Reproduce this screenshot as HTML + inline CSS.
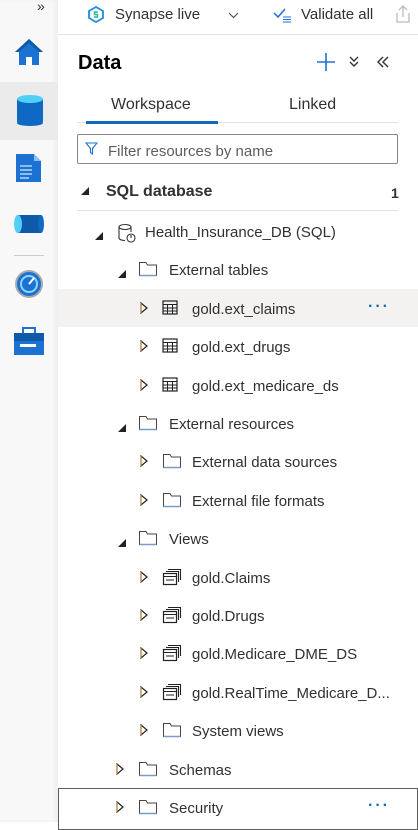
<!DOCTYPE html>
<html><head><meta charset="utf-8"><style>
body{margin:0;width:418px;height:822px;overflow:hidden;background:#fff;font-family:"Liberation Sans",sans-serif;color:#323130;position:relative}
.a{position:absolute}
.side{left:0;top:0;width:58px;height:822px;background:#f8f8f8;box-shadow:inset -3px 0 4px rgba(0,0,0,.04)}
.row{position:absolute;left:58px;width:360px;height:38px}
.t{position:absolute;top:12px;font-size:15px;white-space:nowrap;color:#323130}
.tri{position:absolute}
.ic{position:absolute;top:11px}
</style></head><body>
<div class="a side"></div>
<div class="a" style="left:0;top:82px;width:58px;height:58px;background:#ebebeb"></div>
<div class="a" style="left:37px;top:-2px;font-size:14px;color:#333">»</div>
<svg class="a" style="left:14px;top:38px" width="30" height="28" viewBox="0 0 30 28"><path d="M15 1 L29 14 H25 V27 H5 V14 H1 Z" fill="#1b72d3"/><path d="M15 1 L29 14 H25 L15 5 L5 14 H1Z" fill="#0f5aa8"/><rect x="12" y="19" width="6" height="8" fill="#fff"/></svg>
<svg class="a" style="left:17px;top:94px" width="26" height="32"><rect x="0" y="4" width="26" height="25" rx="2" fill="#0f68c4"/><ellipse cx="13" cy="29" rx="13" ry="3" fill="#0f68c4"/><ellipse cx="13" cy="5" rx="13" ry="4" fill="#50d0f5"/></svg>
<svg class="a" style="left:16px;top:154px" width="26" height="30"><path d="M0 0H18L25 7V28H0Z" fill="#1b72d3"/><path d="M18 0L25 7H18Z" fill="#8fc1ef"/><g stroke="#cfe4fa" stroke-width="1.3"><line x1="4" y1="12" x2="16" y2="12"/><line x1="4" y1="16" x2="16" y2="16"/><line x1="4" y1="20" x2="16" y2="20"/><line x1="4" y1="24" x2="13" y2="24"/></g></svg>
<svg class="a" style="left:13px;top:212px" width="32" height="24"><rect x="4" y="3" width="24" height="18" fill="#0f5aa8"/><ellipse cx="5" cy="12" rx="4" ry="9" fill="#50d0f5"/><ellipse cx="28" cy="12" rx="3" ry="9" fill="#0f68c4"/></svg>
<div class="a" style="left:14px;top:255px;width:30px;height:1px;background:#ccc"></div>
<svg class="a" style="left:14px;top:269px" width="30" height="30"><circle cx="15" cy="15" r="14" fill="#aaa"/><circle cx="15" cy="15" r="12" fill="#1b72d3"/><circle cx="15" cy="15" r="8" fill="none" stroke="#8fd3f5" stroke-width="2"/><line x1="15" y1="15" x2="20" y2="9" stroke="#fff" stroke-width="2"/></svg>
<svg class="a" style="left:14px;top:327px" width="30" height="30"><rect x="9" y="1" width="12" height="6" fill="none" stroke="#1b72d3" stroke-width="2"/><rect x="0" y="6" width="30" height="22" fill="#1b72d3"/><rect x="0" y="6" width="30" height="8" fill="#0f5aa8"/><rect x="6" y="17" width="16" height="3" fill="#fff"/></svg>
<div class="a" style="left:58px;top:34px;width:360px;height:1px;background:#e1e1e1"></div>
<svg class="a" style="left:88px;top:6px" width="16" height="17"><path d="M8 1L15 5V12L8 16L1 12V5Z" fill="none" stroke="#1b8fe0" stroke-width="1.8"/><path d="M10 6H6.5V8.5H9.5V11H6" fill="none" stroke="#2bb3a8" stroke-width="1.5"/></svg>
<div class="a" style="left:115px;top:6px;font-size:15px;color:#323130">Synapse live</div>
<svg class="a" style="left:228px;top:12px" width="11" height="7"><path d="M1 1L5.5 5.5L10 1" fill="none" stroke="#555" stroke-width="1.2"/></svg>
<svg class="a" style="left:273px;top:7px" width="20" height="16"><path d="M1 6L5 10L12 2" fill="none" stroke="#1b72d3" stroke-width="1.5"/><g stroke="#1b72d3"><line x1="10" y1="10" x2="18" y2="10"/><line x1="10" y1="12.5" x2="18" y2="12.5"/><line x1="10" y1="15" x2="18" y2="15"/></g></svg>
<div class="a" style="left:301px;top:6px;font-size:15px">Validate all</div>
<svg class="a" style="left:395px;top:4px" width="16" height="20"><path d="M4 6L8 2L12 6M8 2V13M2 9V18H14V9" fill="none" stroke="#bbb" stroke-width="1.3"/></svg>
<div class="a" style="left:78px;top:52px;font-size:20px;font-weight:bold;color:#000">Data</div>
<svg class="a" style="left:316px;top:52px" width="20" height="20"><path d="M10 1V19M1 10H19" stroke="#1b72d3" stroke-width="1.6"/></svg>
<svg class="a" style="left:349px;top:56px" width="10" height="12"><path d="M1 1L5 5L9 1M1 6L5 10L9 6" fill="none" stroke="#333" stroke-width="1.4"/></svg>
<svg class="a" style="left:377px;top:56px" width="12" height="12"><path d="M6 1L1 6L6 11M11 1L6 6L11 11" fill="none" stroke="#333" stroke-width="1.4"/></svg>
<div class="a" style="left:111px;top:96px;font-size:16px">Workspace</div>
<div class="a" style="left:289px;top:96px;font-size:16px">Linked</div>
<div class="a" style="left:77px;top:122px;width:321px;height:1px;background:#e1e1e1"></div>
<div class="a" style="left:86px;top:121px;width:132px;height:3px;background:#0f6cbd"></div>
<div class="a" style="left:77px;top:134px;width:319px;height:28px;border:1px solid #8a8886;border-radius:2px"></div>
<svg class="a" style="left:85px;top:142px" width="13" height="13"><path d="M1 1H12L7.5 6.5V12L5.5 10.5V6.5Z" fill="none" stroke="#1b72d3" stroke-width="1.1"/></svg>
<div class="a" style="left:108px;top:143px;font-size:15px;color:#605e5c">Filter resources by name</div>
<svg class="a" style="left:81px;top:187px" width="8" height="8"><path d="M8 0V8H0Z" fill="#222"/></svg>
<div class="a" style="left:106px;top:183px;font-size:16px;font-weight:bold">SQL database</div>
<div class="a" style="left:391px;top:185px;font-size:14px;font-weight:bold">1</div>
<div class="a" style="left:77px;top:210px;width:321px;height:1px;background:#e1e1e1"></div>

<div class="a" style="left:58px;top:289px;width:360px;height:38px;background:#f3f2f1"></div>
<div class="a" style="left:58px;top:788px;width:358px;height:40px;border:1px solid #605e5c"></div>

<div id="tree"></div>
<script>
const F='<svg width="20" height="16"><path d="M1.5 1.5H8L9.5 4H18.5V14.5H1.5Z" fill="none" stroke="#444" stroke-width="1"/><path d="M1.5 14.5H18.5" stroke="#7a9cc6" stroke-width="1.4"/></svg>';
const T='<svg width="16" height="16"><rect x="1" y="1" width="14" height="13" fill="none" stroke="#222" stroke-width="1.2"/><path d="M1 4.5H15M1 8H15M1 11H15M5.5 4.5V14M10.5 4.5V14" stroke="#222" stroke-width="1"/></svg>';
const V='<svg width="20" height="18"><path d="M6 1.5H18.5V12M4 3.5H16.5V14" fill="none" stroke="#222" stroke-width="1.1"/><rect x="1.5" y="5.5" width="13" height="11" fill="#fff" stroke="#222" stroke-width="1.2"/><path d="M1.5 8.5H14.5M4 12H12" stroke="#222" stroke-width="1.1"/></svg>';
const D='<svg width="20" height="20"><path d="M2 4V15C2 16.5 5 17.5 8 17.5M14 4V9" fill="none" stroke="#333" stroke-width="1.1"/><ellipse cx="8" cy="4" rx="6" ry="2.5" fill="none" stroke="#333" stroke-width="1.1"/><circle cx="14" cy="15" r="4" fill="#fff" stroke="#333" stroke-width="1.1"/><path d="M14 12V15" stroke="#333" stroke-width="1.1"/></svg>';
const open='<svg width="8" height="8"><path d="M8 0V8H0Z" fill="#222"/></svg>';
const closed='<svg width="8" height="12"><path d="M1 1L7 6L1 11Z" fill="none" stroke="#222" stroke-width="1.2"/><path d="M1 1V11" stroke="#d08a2a" stroke-width="1"/></svg>';
const rows=[
[1,'o',D,'Health_Insurance_DB (SQL)'],
[2,'o',F,'External tables'],
[3,'c',T,'gold.ext_claims',1],
[3,'c',T,'gold.ext_drugs'],
[3,'c',T,'gold.ext_medicare_ds'],
[2,'o',F,'External resources'],
[3,'c',F,'External data sources'],
[3,'c',F,'External file formats'],
[2,'o',F,'Views'],
[3,'c',V,'gold.Claims'],
[3,'c',V,'gold.Drugs'],
[3,'c',V,'gold.Medicare_DME_DS'],
[3,'c',V,'gold.RealTime_Medicare_D...'],
[3,'c',F,'System views'],
[2,'c',F,'Schemas'],
[2,'c',F,'Security',1]];
const tx={1:[93,117,145],2:[116,138,169],3:[140,162,192]};
let h='';rows.forEach((r,i)=>{const y=212+i*38.4;const [tr,ic,t]=tx[r[0]];
const trs=r[1]=='o'?`<div class="tri" style="left:${tr+2-58}px;top:15px">${open}</div>`:`<div class="tri" style="left:${tr-58}px;top:12px">${closed}</div>`;
h+=`<div class="row" style="top:${y}px">${trs}<div class="ic" style="left:${ic-58}px;top:${r[2]==V?10:11}px">${r[2]}</div><div class="t" style="left:${t-58}px">${r[3]}</div>${r[4]?'<div class="t" style="left:310px;top:9px;color:#0f6cbd;font-size:16px;letter-spacing:2px;font-weight:bold">···</div>':''}</div>`;});
document.getElementById('tree').innerHTML=h;
</script>
</body></html>
